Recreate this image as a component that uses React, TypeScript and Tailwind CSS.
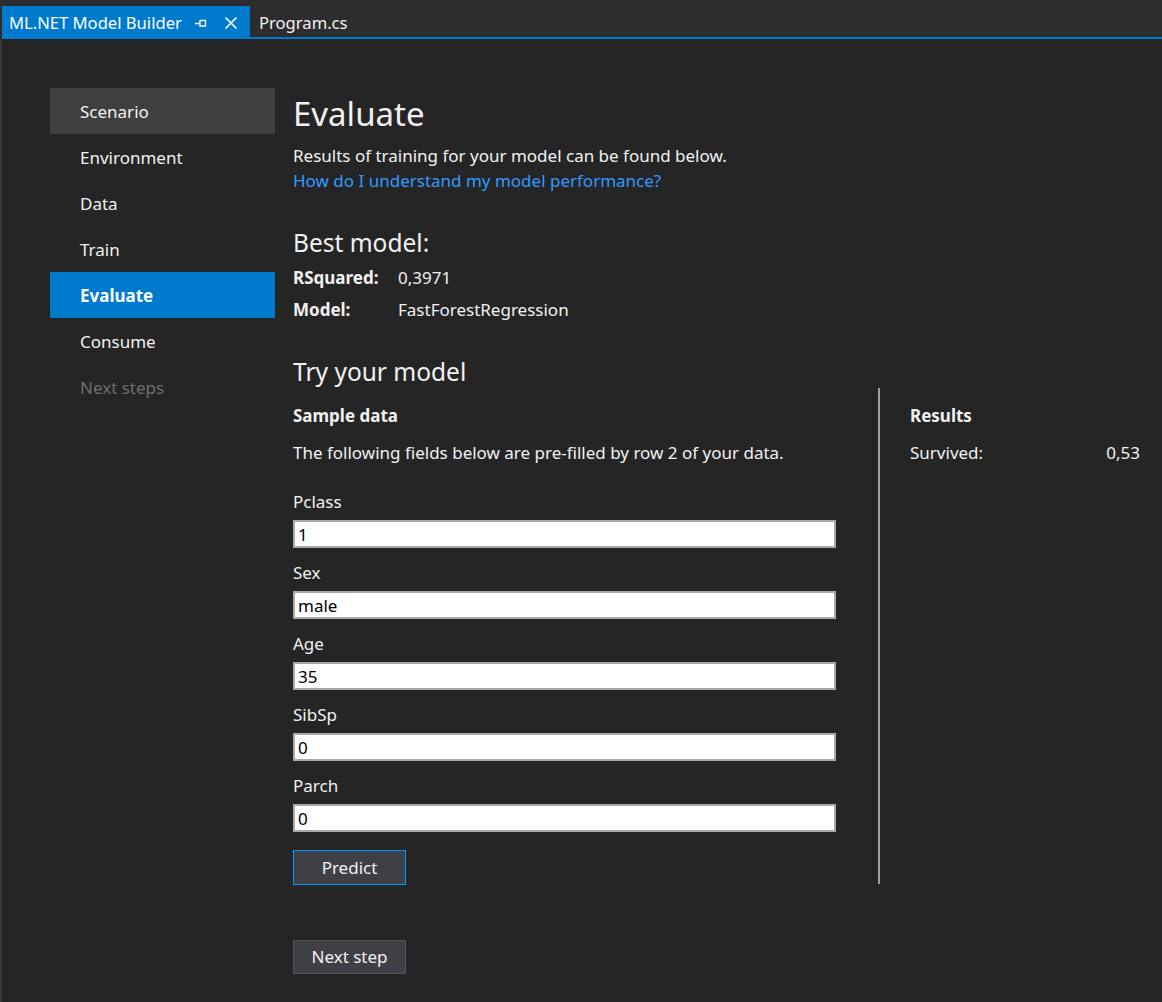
import React from "react";

const font = { fontFamily: '"Noto Sans", "Open Sans", sans-serif' };

function Field({ label, value }: { label: string; value: string }) {
  return (
    <div className="flex flex-col">
      <div className="h-[24px] leading-[24px] text-[17px] text-[#f1f1f1]">{label}</div>
      <div className="mt-[6px] h-[28px] w-[543px] bg-white border-2 border-[#a9a9a9] flex items-center px-[3px] pt-[2px] text-[17px] text-black">
        {value}
      </div>
    </div>
  );
}

export default function App() {
  const nav = ["Scenario", "Environment", "Data", "Train", "Evaluate", "Consume", "Next steps"];
  return (
    <div className="w-[1162px] h-[1002px] bg-[#2d2d30] flex flex-col overflow-hidden" style={font}>
      {/* tab bar */}
      <div className="h-[6px]" />
      <div className="flex h-[31px] items-stretch pl-[2px]">
        <div className="bg-[#007acc] w-[248px] flex items-center pl-[7px] pt-[3px] text-white text-[16.6px]">
          <span>ML.NET Model Builder</span>
          <svg className="ml-[12px]" width="14" height="14" viewBox="0 0 14 14" fill="none" stroke="white" strokeWidth="1.3">
            <path d="M1 7.5h5M6 4v7M6 4.5h5.5v5.5H6" />
          </svg>
          <svg className="ml-[16px]" width="14" height="14" viewBox="0 0 14 14" fill="none" stroke="white" strokeWidth="1.6">
            <path d="M1.5 1.5l11 11M12.5 1.5l-11 11" />
          </svg>
        </div>
        <div className="flex items-center pl-[9px] pt-[3px] text-[16.6px] text-[#f1f1f1]">Program.cs</div>
      </div>
      <div className="h-[2px] bg-[#007acc] ml-[2px]" />
      <div className="flex-1 flex pl-[2px] bg-[#36363b]">
        <div className="flex-1 bg-[#252526] flex">
          {/* sidebar */}
          <div className="pt-[49px] pl-[48px] w-[273px] flex flex-col">
            {nav.map((n) => {
              const cls =
                n === "Scenario"
                  ? "bg-[#3f3f3f] text-[#f1f1f1]"
                  : n === "Evaluate"
                  ? "bg-[#007acc] text-white font-bold"
                  : n === "Next steps"
                  ? "text-[#6e6e6e]"
                  : "text-[#f1f1f1]";
              return (
                <div key={n} className={`h-[46px] flex items-center pl-[30px] pt-[2px] text-[17px] ${cls}`}>
                  {n}
                </div>
              );
            })}
          </div>
          {/* main */}
          <div className="pl-[18px] pt-[55px] flex flex-col text-[#f1f1f1]">
            <div className="text-[33px] leading-[40px] h-[40px]">Evaluate</div>
            <div className="mt-[10px] text-[17px] leading-[24px]">Results of training for your model can be found below.</div>
            <div className="mt-[1px] text-[17px] leading-[24px] text-[#3399ff]">How do I understand my model performance?</div>
            <div className="mt-[34px] text-[24.5px] leading-[32px]">Best model:</div>
            <div className="mt-[3px] flex text-[17px] leading-[32px]">
              <span className="w-[105px] font-bold">RSquared:</span>
              <span>0,3971</span>
            </div>
            <div className="flex text-[17px] leading-[32px]">
              <span className="w-[105px] font-bold">Model:</span>
              <span>FastForestRegression</span>
            </div>
            <div className="mt-[30px] text-[24.5px] leading-[32px]">Try your model</div>
            <div className="flex">
              <div className="w-[585px] flex flex-col">
                <div className="mt-[16px] text-[17px] leading-[24px] font-bold">Sample data</div>
                <div className="mt-[13px] text-[17px] leading-[24px]">
                  The following fields below are pre-filled by row 2 of your data.
                </div>
                <div className="mt-[25px] flex flex-col gap-[13px]">
                  <Field label="Pclass" value="1" />
                  <Field label="Sex" value="male" />
                  <Field label="Age" value="35" />
                  <Field label="SibSp" value="0" />
                  <Field label="Parch" value="0" />
                </div>
                <div className="mt-[18px] w-[113px] h-[35px] bg-[#3f3f46] border border-[#0097fb] flex items-center justify-center text-[17px]">
                  Predict
                </div>
              </div>
              <div className="w-[2px] bg-[#a0a0a0] mt-0" style={{ height: 496 }} />
              <div className="pl-[30px] w-[260px] flex flex-col">
                <div className="mt-[16px] text-[17px] leading-[24px] font-bold">Results</div>
                <div className="mt-[13px] flex justify-between text-[17px] leading-[24px]">
                  <span>Survived:</span>
                  <span>0,53</span>
                </div>
              </div>
            </div>
            <div className="mt-[55px] w-[113px] h-[34px] bg-[#3f3f46] border border-[#555555] flex items-center justify-center text-[17px]">
              Next step
            </div>
          </div>
        </div>
      </div>
    </div>
  );
}
